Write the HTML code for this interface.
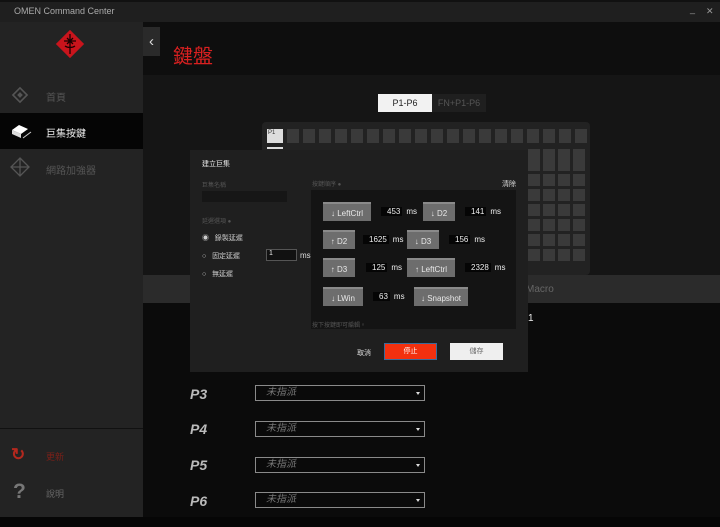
<!DOCTYPE html>
<html><head><meta charset="utf-8"><style>
*{margin:0;padding:0;box-sizing:border-box}
body{width:720px;height:527px;overflow:hidden;background:#0b0b0b;font-family:"Liberation Sans","Noto Sans CJK TC",sans-serif;position:relative;color:#ddd}
.a{position:absolute}
.k{position:absolute;background:#6d6d6d;color:#e8e8e8;font-size:8px;height:19px;line-height:19px;text-align:center;border-top:2px solid #8a8a8a}
.ms{position:absolute;font-size:8px;color:#eee;height:12px;line-height:12px}
.ms b{font-weight:normal;background:#050505;padding:0 2px 0 6px;margin-right:4px}
.sel{position:absolute;left:255px;width:170px;height:16px;border:1px solid #8a8a8a;background:#0a0a0a;font-size:10px;font-style:italic;color:#777;padding-left:10px;line-height:14px}
.sel:after{content:"";position:absolute;right:4px;top:6px;border:2px solid transparent;border-top:3px solid #ddd}
.pl{position:absolute;left:190px;font-size:14px;font-style:italic;font-weight:bold;color:#bbb}
.kb{position:absolute;background:#3a3a3a;width:13px;height:13px}
</style></head><body>
<div class="a" style="left:0;top:0;width:720px;height:22px;background:#1f1f1f;border-top:2px solid #111"></div>
<div class="a" style="left:14px;top:6px;font-size:9px;color:#aaa">OMEN Command Center</div>
<div class="a" style="left:690px;top:4px;font-size:9px;color:#999">_</div>
<div class="a" style="left:706px;top:6px;font-size:9px;color:#999">✕</div>
<!-- sidebar -->
<div class="a" style="left:0;top:22px;width:143px;height:495px;background:#232323"></div>
<svg class="a" style="left:55px;top:29px" width="30" height="30" viewBox="0 0 30 30"><rect x="5" y="5" width="20" height="20" transform="rotate(45 15 15)" fill="#c8141c"/><path d="M15 5v20M9 12h12M10 17c3 2 7 2 10 0M12 9l6 6M18 9l-6 6" stroke="#1a0000" stroke-width="1.3" fill="none"/></svg>
<div class="a" style="left:0;top:113px;width:143px;height:36px;background:#050505"></div>
<svg class="a" style="left:11px;top:86px" width="18" height="18"><rect x="4" y="4" width="10" height="10" transform="rotate(45 9 9)" fill="none" stroke="#555" stroke-width="1.6"/><rect x="7" y="7" width="4" height="4" transform="rotate(45 9 9)" fill="#555"/></svg>
<div class="a" style="left:46px;top:89px;font-size:10px;color:#555">首頁</div>
<svg class="a" style="left:10px;top:122px" width="22" height="18"><path d="M2 8l7-5 9 4-7 5z" fill="#fff"/><path d="M2 8l9 4v4l-9-4z" fill="#ddd"/><path d="M13 16l8-6" stroke="#ccc"/></svg>
<div class="a" style="left:46px;top:125px;font-size:10px;color:#eee">巨集按鍵</div>
<svg class="a" style="left:10px;top:157px" width="20" height="20"><path d="M10 1L19 10 10 19 1 10z M10 1v18 M1 10h18" stroke="#555" stroke-width="1.3" fill="none"/></svg>
<div class="a" style="left:46px;top:162px;font-size:10px;color:#555">網路加強器</div>
<div class="a" style="left:0;top:428px;width:143px;height:1px;background:#111"></div>
<div class="a" style="left:11px;top:445px;font-size:17px;color:#b3281e;font-weight:bold">↻</div>
<div class="a" style="left:46px;top:450px;font-size:9px;color:#7a2018">更新</div>
<div class="a" style="left:13px;top:480px;font-size:21px;color:#777;font-weight:bold">?</div>
<div class="a" style="left:46px;top:487px;font-size:9px;color:#666">說明</div>
<!-- header -->
<div class="a" style="left:143px;top:22px;width:577px;height:53px;background:#0e0e0e"></div>
<div class="a" style="left:143px;top:27px;width:17px;height:29px;background:#2a2a2a;color:#ddd;font-size:15px;text-align:center;line-height:29px">‹</div>
<div class="a" style="left:173px;top:40px;font-size:20px;color:#d92020">鍵盤</div>
<div class="a" style="left:143px;top:75px;width:577px;height:200px;background:#151515"></div>
<div class="a" style="left:378px;top:94px;width:54px;height:18px;background:#f2f2f2;color:#222;font-size:9px;text-align:center;line-height:18px">P1-P6</div>
<div class="a" style="left:432px;top:94px;width:54px;height:18px;background:#1f1f1f;color:#555;font-size:9px;text-align:center;line-height:18px">FN+P1-P6</div>
<!-- keyboard -->
<div class="a" style="left:262px;top:122px;width:328px;height:153px;background:#222;border-radius:4px"></div>
<div class="a" style="left:267px;top:129px;width:16px;height:14px;background:#ddd;font-size:6px;color:#333;padding:1px">P1</div>
<div class="a" style="left:267px;top:147px;width:16px;height:2px;background:#ddd"></div>
<div class="a" style="left:287px;top:129px;width:300px;height:14px;background:repeating-linear-gradient(90deg,#3a3a3a 0 12px,#222 12px 16px)"></div>
<div class="a" style="left:528px;top:149px;width:59px;height:112px;background:repeating-linear-gradient(90deg,#3a3a3a 0 12px,#222 12px 15px)"></div>
<div class="a" style="left:528px;top:161px;width:59px;height:100px;background:repeating-linear-gradient(0deg,transparent 0 12px,#222 12px 15px)"></div>
<!-- band -->
<div class="a" style="left:143px;top:275px;width:577px;height:28px;background:#2b2b2b"></div>
<div class="a" style="left:526px;top:284px;font-size:10px;color:#666">Macro</div>
<div class="a" style="left:528px;top:313px;font-size:10px;color:#eee">1</div>
<!-- rows -->
<div class="pl" style="top:386px">P3</div><div class="sel" style="top:385px">未指派</div>
<div class="pl" style="top:421px">P4</div><div class="sel" style="top:421px">未指派</div>
<div class="pl" style="top:457px">P5</div><div class="sel" style="top:457px">未指派</div>
<div class="pl" style="top:493px">P6</div><div class="sel" style="top:492px">未指派</div>
<div class="a" style="left:0;top:517px;width:720px;height:10px;background:#060606"></div>
<!-- modal -->
<div class="a" style="left:190px;top:150px;width:338px;height:222px;background:#1f1f1f"></div>
<div class="a" style="left:202px;top:159px;font-size:7px;color:#eee">建立巨集</div>
<div class="a" style="left:202px;top:180px;font-size:6px;color:#555">巨集名稱</div>
<div class="a" style="left:202px;top:191px;width:85px;height:11px;background:#161616"></div>
<div class="a" style="left:202px;top:216px;font-size:6px;color:#555">延遲選項 ●</div>
<div class="a" style="left:202px;top:233px;font-size:7px;color:#ccc">◉ &nbsp;&nbsp;錄製延遲</div>
<div class="a" style="left:202px;top:251px;font-size:7px;color:#ccc">○ &nbsp;&nbsp;固定延遲</div>
<div class="a" style="left:202px;top:269px;font-size:7px;color:#ccc">○ &nbsp;&nbsp;無延遲</div>
<div class="a" style="left:266px;top:249px;width:31px;height:12px;border:1px solid #555;background:#111;font-size:7px;color:#eee;padding-left:2px">1</div>
<div class="a" style="left:300px;top:251px;font-size:8px;color:#ddd">ms</div>
<div class="a" style="left:312px;top:179px;font-size:6px;color:#555">按鍵順序 ●</div>
<div class="a" style="left:502px;top:179px;font-size:7px;color:#ddd">清除</div>
<div class="a" style="left:311px;top:190px;width:205px;height:139px;background:#141414"></div>
<div class="k" style="left:323px;top:202px;width:48px">↓ LeftCtrl</div>
<div class="ms" style="left:381px;top:206px"><b>453</b>ms</div>
<div class="k" style="left:423px;top:202px;width:32px">↓ D2</div>
<div class="ms" style="left:465px;top:206px"><b>141</b>ms</div>
<div class="k" style="left:323px;top:230px;width:32px">↑ D2</div>
<div class="ms" style="left:363px;top:234px"><b>1625</b>ms</div>
<div class="k" style="left:407px;top:230px;width:32px">↓ D3</div>
<div class="ms" style="left:449px;top:234px"><b>156</b>ms</div>
<div class="k" style="left:323px;top:258px;width:32px">↑ D3</div>
<div class="ms" style="left:366px;top:262px"><b>125</b>ms</div>
<div class="k" style="left:407px;top:258px;width:48px">↑ LeftCtrl</div>
<div class="ms" style="left:465px;top:262px"><b>2328</b>ms</div>
<div class="k" style="left:323px;top:287px;width:40px">↓ LWin</div>
<div class="ms" style="left:373px;top:291px"><b>63</b>ms</div>
<div class="k" style="left:414px;top:287px;width:54px">↓ Snapshot</div>
<div class="a" style="left:312px;top:320px;font-size:6px;color:#555">按下按鍵即可編輯。</div>
<div class="a" style="left:357px;top:348px;font-size:7px;color:#ddd">取消</div>
<div class="a" style="left:384px;top:343px;width:53px;height:17px;background:#f2300f;border:1px solid #3a6a9a;font-size:7px;color:#fff;text-align:center;line-height:15px">停止</div>
<div class="a" style="left:450px;top:343px;width:53px;height:17px;background:#efefef;font-size:7px;color:#666;text-align:center;line-height:17px">儲存</div>
</body></html>
